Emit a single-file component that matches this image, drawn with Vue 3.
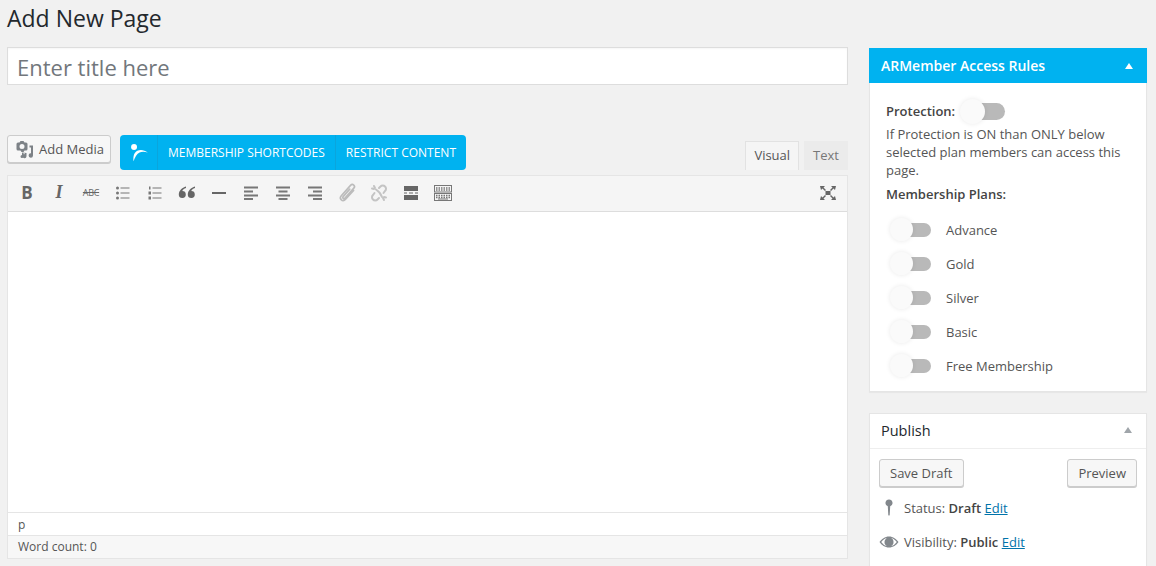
<script setup>
const plans = ['Advance', 'Gold', 'Silver', 'Basic', 'Free Membership']
</script>

<template>
  <div class="page">
    <main class="main">
      <h1 class="heading">Add New Page</h1>
      <div class="title-input">Enter title here</div>
      <div class="tools">
        <div class="tools-left">
          <button class="add-media">
            <svg class="media-icon" width="20" height="20" viewBox="0 0 20 20"><path fill="#7d8287" fill-rule="evenodd" d="M5.500 2h3l1 1.500h1.500a1.500 1.500 0 0 1 1.500 1.500v5a1.500 1.500 0 0 1-1.500 1.500H9.500L8.500 13H6.500l-1-1.500H3A1.500 1.500 0 0 1 1.500 10V5A1.500 1.500 0 0 1 3 3.500h1.500zM7 5a2.500 2.500 0 1 0 0 5 2.500 2.500 0 0 0 0-5z"/><path fill="#7d8287" d="M14.500 6.500H18v10a2.200 2.200 0 1 1-2-2.200V8.500h-1.500zM7 13.500l4.500.5v3.200a2 2 0 1 1-1.500-2v-.8L8.500 14.200v3.300a1.500 1.500 0 1 1-1.500-1.500z"/></svg>
            Add Media
          </button>
          <div class="blue-bar">
            <span class="blue-logo">
              <svg width="22" height="22" viewBox="0 0 20 20"><circle cx="5.500" cy="4.500" r="2.700" fill="#fff"/><path fill="#fff" d="M5 17.500C4.500 13 5.500 9.500 8.500 8c3-1.400 6.500-.6 9.500 1.500-2.700-.9-5.500-1-7.500 0C8 10.700 6.500 13.500 5 17.500z"/></svg>
            </span>
            <span class="blue-item">MEMBERSHIP SHORTCODES</span>
            <span class="blue-item">RESTRICT CONTENT</span>
          </div>
        </div>
        <div class="tabs">
          <span class="tab active">Visual</span>
          <span class="tab">Text</span>
        </div>
      </div>
      <section class="editor">
        <div class="toolbar">
          <div class="icons">
            <span class="ic t-b">B</span>
            <span class="ic t-i">I</span>
            <span class="ic t-s">ABC</span>
            <span class="ic"><svg width="20" height="20" viewBox="0 0 20 20"><g fill="#777"><circle cx="4.500" cy="5" r="1.500"/><circle cx="4.500" cy="10" r="1.500"/><circle cx="4.500" cy="15" r="1.500"/><rect x="7.500" y="4.500" width="9" height="1"/><rect x="7.500" y="9.500" width="9" height="1"/><rect x="7.500" y="14.500" width="9" height="1"/></g></svg></span>
            <span class="ic"><svg width="20" height="20" viewBox="0 0 20 20"><g fill="#777"><rect x="4" y="3.500" width="1.500" height="3"/><rect x="3.500" y="8.500" width="2.500" height="3"/><rect x="3.500" y="13.500" width="2.500" height="3"/><rect x="7.500" y="4.500" width="9" height="1"/><rect x="7.500" y="9.500" width="9" height="1"/><rect x="7.500" y="14.500" width="9" height="1"/></g></svg></span>
            <span class="ic"><svg width="20" height="20" viewBox="0 0 20 20"><path fill="#666" d="M9 3.500C5 4.800 1.800 7.500 1.800 11.800a3.500 3.500 0 1 0 3.500-3.700c.4-1.300 1.800-2.400 3.700-3zM18 3.500c-4 1.300-7.200 4-7.200 8.300a3.500 3.500 0 1 0 3.500-3.700c.4-1.300 1.800-2.400 3.700-3z"/></svg></span>
            <span class="ic"><svg width="20" height="20" viewBox="0 0 20 20"><rect x="3" y="9" width="14" height="2" fill="#666"/></svg></span>
            <span class="ic"><svg width="20" height="20" viewBox="0 0 20 20"><g fill="#777"><rect x="3" y="3.500" width="14" height="2"/><rect x="3" y="7.500" width="9" height="2"/><rect x="3" y="11.500" width="14" height="2"/><rect x="3" y="15" width="9" height="2"/></g></svg></span>
            <span class="ic"><svg width="20" height="20" viewBox="0 0 20 20"><g fill="#777"><rect x="3" y="3.500" width="14" height="2"/><rect x="5.500" y="7.500" width="9" height="2"/><rect x="3" y="11.500" width="14" height="2"/><rect x="5.500" y="15" width="9" height="2"/></g></svg></span>
            <span class="ic"><svg width="20" height="20" viewBox="0 0 20 20"><g fill="#777"><rect x="3" y="3.500" width="14" height="2"/><rect x="8" y="7.500" width="9" height="2"/><rect x="3" y="11.500" width="14" height="2"/><rect x="8" y="15" width="9" height="2"/></g></svg></span>
            <span class="ic"><svg width="22" height="22" viewBox="0 0 20 20"><path fill="none" stroke="#bcbcbc" stroke-width="1.500" stroke-linecap="round" stroke-linejoin="round" d="M12.500 6.500l-6 6.800c-1 1.200.6 2.500 1.700 1.300l8-9c1.800-2.100-1-4.700-3-2.500l-8.400 9.400c-2.400 2.700 1.300 6.100 3.700 3.400l7.500-8.200"/></svg></span>
            <span class="ic"><svg width="20" height="20" viewBox="0 0 20 20"><g fill="none" stroke="#c4c4c4" stroke-width="2" stroke-linecap="round"><path d="M10 5l1.500-1.500a3 3 0 0 1 4.500 0 3 3 0 0 1 0 4.500L14.500 10"/><path d="M10 15l-1.500 1.500a3 3 0 0 1-4.500 0 3 3 0 0 1 0-4.500L5.500 10"/><path d="M7 6.500c3 2 5 4.500 6 7.500"/><path d="M5 3l1 2M3 5.500l2 .5M15 17l-1-2M17 14.500l-2-.5"/></g></svg></span>
            <span class="ic"><svg width="20" height="20" viewBox="0 0 20 20"><g fill="#666"><rect x="3" y="3" width="14" height="5"/><rect x="3" y="9.500" width="3" height="1"/><rect x="8" y="9.500" width="4" height="1"/><rect x="14" y="9.500" width="3" height="1"/><rect x="3" y="12" width="14" height="5"/></g></svg></span>
            <span class="ic"><svg width="20" height="20" viewBox="0 0 20 20"><g fill="none" stroke="#777"><rect x="1.500" y="2.500" width="17" height="6.500"/><rect x="1.500" y="10.500" width="17" height="7"/></g><g stroke="#777" stroke-width="1.500" stroke-dasharray="1.500 1"><path d="M3 5h14M3 6.900h14M3 12.500h14M3 14.400h14"/></g><rect x="5" y="15.500" width="10" height="1" fill="#777"/></svg></span>
          </div>
          <span class="ic expand"><svg width="20" height="20" viewBox="0 0 20 20"><g fill="#666"><rect x="7.500" y="8" width="5" height="4"/><path d="M2 3h5L5.500 4.500 8 7 7 8 4.500 5.500 3 7zM18 3h-5l1.500 1.500L12 7l1 1 2.500-2.500L17 7zM2 17h5l-1.500-1.500L8 13l-1-1-2.500 2.500L3 13zM18 17h-5l1.500-1.500L12 13l1-1 2.500 2.500L17 13z"/></g></svg></span>
        </div>
        <div class="content"></div>
        <div class="path">p</div>
        <div class="status">Word count: 0</div>
      </section>
    </main>

    <aside class="side">
      <section class="card">
        <h2 class="card-head blue">ARMember Access Rules<span class="caret white"></span></h2>
        <div class="rules">
          <div class="protect">
            <strong>Protection:</strong>
            <span class="toggle"><i></i></span>
          </div>
          <p class="note">If Protection is ON than ONLY below selected plan members can access this page.</p>
          <strong class="plans-label">Membership Plans:</strong>
          <ul class="plans">
            <li v-for="plan in plans" :key="plan" class="plan">
              <span class="toggle small"><i></i></span>
              <span>{{ plan }}</span>
            </li>
          </ul>
        </div>
      </section>

      <section class="card publish">
        <h2 class="card-head plain">Publish<span class="caret"></span></h2>
        <div class="pub-body">
          <div class="pub-actions">
            <button class="btn">Save Draft</button>
            <button class="btn">Preview</button>
          </div>
          <div class="pub-row">
            <span class="pub-ic"><svg width="20" height="20" viewBox="0 0 20 20"><path fill="#82878c" d="M10 1.500a3.500 3.500 0 0 1 1.200 6.800L10.700 17c0 .7-1.400.7-1.400 0l-.5-8.700A3.500 3.500 0 0 1 10 1.500z"/></svg></span>
            <span>Status: <b>Draft</b> <a>Edit</a></span>
          </div>
          <div class="pub-row">
            <span class="pub-ic"><svg width="20" height="20" viewBox="0 0 20 20"><path fill="#82878c" fill-rule="evenodd" d="M10 4.500c4 0 7.500 2.500 9.500 5.500-2 3-5.500 5.500-9.500 5.500S2.500 13 .5 10c2-3 5.500-5.500 9.500-5.500zM2.200 10c1.700 2.300 4 4 6 4.300A4.500 4.500 0 0 1 5.500 10c0-1.700 1-3.300 2.700-4.300-2 .3-4.300 2-6 4.300zm9.600-4.300A4.500 4.500 0 0 1 14.500 10a4.500 4.500 0 0 1-2.700 4.300c2-.3 4.300-2 6-4.300-1.700-2.300-4-4-6-4.300z"/><circle cx="10" cy="10" r="3.500" fill="#82878c"/></svg></span>
            <span>Visibility: <b>Public</b> <a>Edit</a></span>
          </div>
        </div>
      </section>
    </aside>
  </div>
</template>

<style>
html, body { margin: 0; background: #f1f1f1; }
</style>

<style scoped>
* { box-sizing: border-box; }
.page {
  display: grid;
  grid-template-columns: 841px 278px;
  column-gap: 21px;
  padding-left: 7px;
  height: 566px;
  overflow: hidden;
  background: #f1f1f1;
  font-family: "Open Sans", sans-serif;
  font-size: 13px;
  color: #444;
}
.heading {
  margin: 0;
  height: 47px;
  padding-top: 2px;
  font-size: 23px;
  line-height: 32px;
  font-weight: 400;
  color: #23282d;
}
.title-input {
  height: 38px;
  padding-left: 9px;
  border: 1px solid #ddd;
  background: #fff;
  font-size: 22px;
  line-height: 39px;
  color: #72777c;
  box-shadow: inset 0 1px 2px rgba(0,0,0,.04);
}
.tools {
  display: flex;
  justify-content: space-between;
  height: 40px;
  margin-top: 50px;
}
.tools-left { display: flex; align-items: flex-start; gap: 9px; }
.add-media {
  display: flex;
  align-items: center;
  gap: 4px;
  width: 104px;
  height: 28px;
  padding: 0 0 0 7px;
  border: 1px solid #ccc;
  border-radius: 3px;
  background: #f7f7f7;
  box-shadow: 0 1px 0 #ccc;
  font: 13px "Open Sans", sans-serif;
  color: #555;
}
.blue-bar {
  display: flex;
  height: 35px;
  border-radius: 4px;
  background: #00b2f0;
  color: #fff;
  font-size: 12px;
  line-height: 35px;
}
.blue-logo { display: flex; align-items: center; justify-content: center; width: 37px; }
.blue-item { padding: 0 10px; border-left: 1px solid #0aa5dd; }
.tabs { display: flex; gap: 5px; align-items: flex-start; padding-top: 6px; }
.tab {
  height: 29px;
  padding: 0 8px;
  border: 1px solid #ebebeb;
  border-bottom: none;
  background: #ebebeb;
  line-height: 26px;
  color: #777;
}
.tab.active { background: #f5f5f5; color: #555; border-color: #e2e2e2; }
.editor {
  display: flex;
  flex-direction: column;
  height: 384px;
  border: 1px solid #e5e5e5;
  background: #fff;
}
.toolbar {
  display: flex;
  align-items: center;
  justify-content: space-between;
  height: 36px;
  padding: 0 8px 2px 3px;
  background: #f5f5f5;
  border-bottom: 1px solid #ddd;
}
.icons { display: flex; }
.ic {
  display: flex;
  align-items: center;
  justify-content: center;
  width: 32px;
  height: 30px;
  color: #555;
}
.t-b { font-size: 17px; font-weight: 700; color: #666; }
.t-i { font: italic 700 18px "Liberation Serif", serif; color: #666; }
.t-s { font-size: 9px; text-decoration: line-through; color: #666; letter-spacing: -.3px; }
.expand { width: 22px; }
.content { flex: 1; }
.path {
  height: 23px;
  padding-left: 10px;
  border-top: 1px solid #e5e5e5;
  font-size: 12px;
  line-height: 23px;
  color: #555;
}
.status {
  height: 23px;
  padding-left: 10px;
  border-top: 1px solid #e5e5e5;
  background: #f7f7f7;
  font-size: 12px;
  line-height: 22px;
  color: #555;
}
.side { padding-top: 48px; }
.card {
  background: #fff;
  border: 1px solid #e5e5e5;
  box-shadow: 0 1px 1px rgba(0,0,0,.04);
}
.card-head {
  display: flex;
  justify-content: space-between;
  align-items: center;
  height: 35px;
  margin: 0;
  padding: 0 14px 0 11px;
  font-size: 14px;
  font-weight: 600;
  color: #23282d;
  border-bottom: 1px solid #eee;
}
.card-head.plain { font-weight: 400; font-size: 14.500px; padding-bottom: 2px; }
.card-head.blue { margin: -1px -1px 0; background: #00b2f0; color: #fff; border: none; padding: 0 14px 0 12px; }
.caret {
  width: 0;
  height: 0;
  border-left: 4.500px solid transparent;
  border-right: 4.500px solid transparent;
  border-bottom: 6px solid #a0a5aa;
}
.caret.white { border-bottom-color: #fff; }
.rules { height: 308px; padding: 18px 16px 0 16px; }
.protect { display: flex; align-items: center; height: 20px; gap: 8px; }
strong { font-weight: 600; color: #444; }
.note { margin: 4px 0 0; font-size: 13px; line-height: 18px; color: #555; }
.plans-label { display: block; margin-top: 6px; line-height: 18px; }
.plans { list-style: none; margin: 10px 0 0; padding: 0; }
.plan {
  display: flex;
  align-items: center;
  gap: 15px;
  height: 34px;
  padding-left: 7px;
  color: #555;
}
.toggle {
  position: relative;
  display: inline-block;
  width: 42px;
  height: 17px;
  border-radius: 9px;
  background: #b9b9b9;
}
.toggle i {
  position: absolute;
  left: -3px;
  top: -4px;
  width: 25px;
  height: 25px;
  border-radius: 50%;
  background: #fafafa;
  box-shadow: 0 0 5px rgba(0,0,0,.09);
}
.toggle.small { width: 38px; height: 14px; }
.toggle.small i { top: -5px; width: 23px; height: 23px; }
.publish { margin-top: 21px; height: 200px; }
.pub-body { padding: 10px 9px 0; }
.pub-actions { display: flex; justify-content: space-between; }
.btn {
  height: 28px;
  padding: 0 10px;
  border: 1px solid #ccc;
  border-radius: 3px;
  background: #f7f7f7;
  box-shadow: 0 1px 0 #ccc;
  font: 13px "Open Sans", sans-serif;
  color: #555;
}
.pub-row {
  display: flex;
  align-items: center;
  gap: 5px;
  height: 34px;
  color: #555;
}
.pub-actions + .pub-row { margin-top: 4px; }
.pub-ic { display: flex; width: 20px; justify-content: center; }
b { font-weight: 600; color: #444; }
a { color: #0073aa; text-decoration: underline; }
</style>
